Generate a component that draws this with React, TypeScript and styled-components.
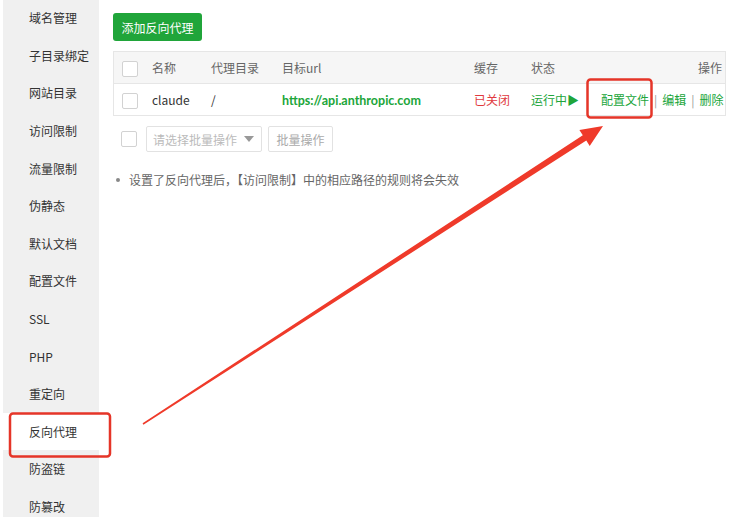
import styled, { createGlobalStyle } from "styled-components"

const GlobalStyle = createGlobalStyle`
    html, body {
        margin: 0;
        padding: 0;
        background: #fff;
        overflow: hidden;
    }
    body {
        font-family: "Noto Sans CJK SC", "Noto Sans", sans-serif;
        font-size: 12px;
        color: #333;
    }
`

const GREEN = '#20a53a'

const Page = styled.div`
    position: relative;
    display: flex;
    width: 741px;
    height: 520px;
`

const Sidebar = styled.ul`
    flex-shrink: 0;
    list-style: none;
    margin: 0 0 0 3px;
    padding: 0;
    width: 96px;
    height: 517px;
    background: #f0f0f0;
    overflow: hidden;
`

const SideItem = styled.li<{first?: boolean, active?: boolean}>`
    height: 37.6px;
    line-height: 37.6px;
    padding-left: 26px;
    margin-top: ${props => props.first ? '-0.8px' : '0'};
    background: ${props => props.active ? '#fff' : 'transparent'};
    color: #333;
    white-space: nowrap;
`

const Content = styled.div`
    flex: 1;
    min-width: 0;
    padding: 13px 15px 0 14px;
    display: flex;
    flex-direction: column;
    align-items: flex-start;
`

const AddButton = styled.button`
    height: 28px;
    width: 89px;
    padding: 0;
    border: none;
    border-radius: 3px;
    background: ${GREEN};
    color: #fff;
    font-family: inherit;
    font-size: 12px;
`

const Table = styled.div`
    margin-top: 10px;
    width: 100%;
    border: 1px solid #e6e6e6;
    box-sizing: border-box;
`

const Row = styled.div<{head?: boolean}>`
    display: grid;
    grid-template-columns: 30px 59px 71px 192px 57px 70px 1fr;
    align-items: center;
    height: 31px;
    background: ${props => props.head ? '#f6f6f6' : '#fff'};
    border-top: ${props => props.head ? 'none' : '1px solid #e6e6e6'};
    color: ${props => props.head ? '#666' : '#333'};
`

const Cell = styled.div<{right?: boolean}>`
    padding-left: 8px;
    padding-right: ${props => props.right ? '3px' : '0'};
    text-align: ${props => props.right ? 'right' : 'left'};
    white-space: nowrap;
`

const Check = styled.span`
    display: inline-block;
    width: 14px;
    height: 14px;
    border: 1px solid #d2d2d2;
    border-radius: 2px;
    background: #fff;
    vertical-align: middle;
`

const Url = styled.span`
    color: ${GREEN};
    font-family: Lato, "Noto Sans", sans-serif;
    font-weight: 700;
    font-size: 12.5px;
`

const Status = styled.span<{tone: 'red' | 'green'}>`
    color: ${props => props.tone === 'red' ? '#e0393e' : GREEN};
`

const OpLink = styled.a`
    color: ${GREEN};
    text-decoration: none;
`

const Sep = styled.span`
    color: #999;
    margin: 0 5px;
`

const BatchBar = styled.div`
    margin-top: 10px;
    display: flex;
    align-items: center;
    gap: 6px;
    padding-left: 8px;
`

const BatchSelect = styled.div`
    display: flex;
    align-items: center;
    justify-content: space-between;
    box-sizing: border-box;
    width: 116px;
    height: 26px;
    margin-left: 3px;
    padding: 0 6px;
    border: 1px solid #e2e2e2;
    border-radius: 2px;
    color: #bbb;
`

const Caret = styled.span`
    width: 0;
    height: 0;
    border-left: 5px solid transparent;
    border-right: 5px solid transparent;
    border-top: 6px solid #999;
    margin-right: 1px;
`

const BatchButton = styled.button`
    height: 26px;
    width: 65px;
    border: 1px solid #e2e2e2;
    border-radius: 2px;
    background: #fff;
    color: #aaa;
    font-family: inherit;
    font-size: 12px;
`

const Tips = styled.ul`
    list-style: none;
    margin: 19px 0 0;
    padding: 0;
    color: #666;
`

const Tip = styled.li`
    display: flex;
    align-items: center;
    gap: 9px;
    padding-left: 3px;
    &::before {
        content: "";
        width: 4px;
        height: 4px;
        border-radius: 50%;
        background: #888;
    }
`

const Marks = styled.svg`
    position: absolute;
    left: 0;
    top: 0;
    pointer-events: none;
`

const menu = ['域名管理', '子目录绑定', '网站目录', '访问限制', '流量限制', '伪静态', '默认文档', '配置文件', 'SSL', 'PHP', '重定向', '反向代理', '防盗链', '防篡改']

// red annotation: boxes plus a tapered arrow pointing at the config link
const arrowPoints = (sx: number, sy: number, tx: number, ty: number) => {
    const dx = tx - sx, dy = ty - sy
    const len = Math.hypot(dx, dy)
    const ux = dx / len, uy = dy / len
    const nx = -uy, ny = ux
    const headLen = 22, headW = 9.5, shaftW = 3.2, tailW = 0.8
    const bx = tx - ux * headLen, by = ty - uy * headLen
    const pts = [
        [sx + nx * tailW, sy + ny * tailW],
        [bx + nx * shaftW, by + ny * shaftW],
        [bx + nx * headW, by + ny * headW],
        [tx, ty],
        [bx - nx * headW, by - ny * headW],
        [bx - nx * shaftW, by - ny * shaftW],
        [sx - nx * tailW, sy - ny * tailW],
    ]
    return pts.map(p => p[0].toFixed(1) + ',' + p[1].toFixed(1)).join(' ')
}

export default function App() {
    return (
        <Page>
            <GlobalStyle />
            <Sidebar>
                {menu.map((m, i) => (
                    <SideItem key={m} first={i === 0} active={m === '反向代理'}>{m}</SideItem>
                ))}
            </Sidebar>
            <Content>
                <AddButton>添加反向代理</AddButton>
                <Table>
                    <Row head>
                        <Cell><Check /></Cell>
                        <Cell>名称</Cell>
                        <Cell>代理目录</Cell>
                        <Cell>目标url</Cell>
                        <Cell>缓存</Cell>
                        <Cell>状态</Cell>
                        <Cell right>操作</Cell>
                    </Row>
                    <Row>
                        <Cell><Check /></Cell>
                        <Cell>claude</Cell>
                        <Cell>/</Cell>
                        <Cell><Url>https://api.anthropic.com</Url></Cell>
                        <Cell><Status tone="red">已关闭</Status></Cell>
                        <Cell><Status tone="green">运行中▶</Status></Cell>
                        <Cell right>
                            <OpLink>配置文件</OpLink><Sep>|</Sep>
                            <OpLink>编辑</OpLink><Sep>|</Sep>
                            <OpLink>删除</OpLink>
                        </Cell>
                    </Row>
                </Table>
                <BatchBar>
                    <Check />
                    <BatchSelect>请选择批量操作<Caret /></BatchSelect>
                    <BatchButton>批量操作</BatchButton>
                </BatchBar>
                <Tips>
                    <Tip>设置了反向代理后，【访问限制】中的相应路径的规则将会失效</Tip>
                </Tips>
            </Content>
            <Marks width={741} height={520} viewBox="0 0 741 520">
                <rect x={10} y={413.5} width={100} height={43} rx={3} fill="none" stroke="#e53528" strokeWidth={2.5} />
                <rect x={587.5} y={79.5} width={64} height={38} rx={3} fill="none" stroke="#e53528" strokeWidth={2.5} />
                <polygon points={arrowPoints(143, 424, 603, 126)} fill="#ef3a2a" />
            </Marks>
        </Page>
    )
}
